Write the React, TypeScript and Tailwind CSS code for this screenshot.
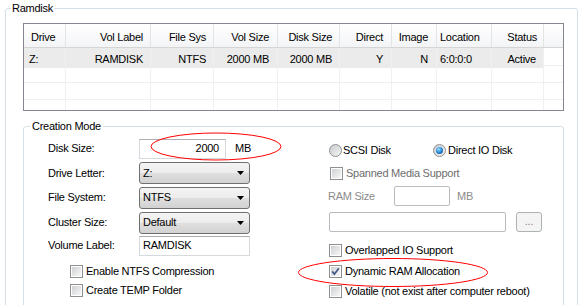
import type { ReactNode } from 'react'

interface Column {
  label: string
  value: string
  cell: string
  head: string
}

// list view columns, widths include the 1px grid line on the right
const columns: Column[] = [
  { label: 'Drive', value: 'Z:', cell: 'pl-[5px] text-left', head: 'pl-[7px] text-left' },
  { label: 'Vol Label', value: 'RAMDISK', cell: 'pr-[7px] text-right', head: 'pr-[7px] text-right' },
  { label: 'File Sys', value: 'NTFS', cell: 'pr-[7px] text-right', head: 'pr-[7px] text-right' },
  { label: 'Vol Size', value: '2000 MB', cell: 'pr-[8px] text-right', head: 'pr-[8px] text-right' },
  { label: 'Disk Size', value: '2000 MB', cell: 'pr-[7px] text-right', head: 'pr-[7px] text-right' },
  { label: 'Direct', value: 'Y', cell: 'pr-[8px] text-right', head: 'pr-[8px] text-right' },
  { label: 'Image', value: 'N', cell: 'pr-[8px] text-right', head: 'pr-[8px] text-right' },
  { label: 'Location', value: '6:0:0:0', cell: 'pl-[3px] text-left', head: 'pl-[3px] text-left' },
  { label: 'Status', value: 'Active', cell: 'pr-[7px] text-right', head: 'pr-[6px] text-right' },
]

const gridCols = 'grid grid-cols-[42px_85px_63px_64px_62px_52px_45px_55px_52px_19px]'

function Check({ checked }: { checked?: boolean }) {
  return (
    <span className="relative flex h-[13px] w-[13px] shrink-0 border border-[#8e8f8f] bg-white p-[1px]">
      <span className="flex-1 bg-gradient-to-br from-[#cfd1d4] to-[#f7f7f7]" />
      {checked && (
        <svg className="absolute left-[-1px] top-[-1px]" width="13" height="13" viewBox="0 0 13 13">
          <path d="M3.2 6.4 L5.4 9.2 L9.8 3.2" fill="none" stroke="#43568a" strokeWidth="1.7" />
        </svg>
      )}
    </span>
  )
}

function Radio({ selected }: { selected?: boolean }) {
  return (
    <span className="flex h-[13px] w-[13px] shrink-0 items-center justify-center rounded-full border border-[#8e8f8f] bg-gradient-to-br from-[#c9cbce] to-[#f5f5f5]">
      {selected && (
        <span className="h-[7px] w-[7px] rounded-full bg-[radial-gradient(circle_at_40%_35%,#a8e2ff,#2a8fe0_45%,#0b3f7a)]" />
      )}
    </span>
  )
}

function CheckRow({ label, checked, dim, className }: { label: string; checked?: boolean; dim?: boolean; className: string }) {
  return (
    <div className={`flex items-center gap-[3px] ${className}`}>
      <Check checked={checked} />
      <span className={dim ? 'text-[#6d6d6d]' : 'text-black'}>{label}</span>
    </div>
  )
}

function Combo({ value }: { value: string }) {
  return (
    <div className="flex h-[22px] w-[111px] items-center justify-between rounded-[3px] border border-[#707070] bg-[linear-gradient(#f4f4f4_0%,#ececec_50%,#dfdfdf_50%,#d2d2d2_100%)] pl-[3px] pr-[4px]">
      <span>{value}</span>
      <svg width="8" height="4" viewBox="0 0 8 4">
        <path d="M0 0 H7 L3.5 4 Z" fill="#000" />
      </svg>
    </div>
  )
}

function TextBox({ children, className }: { children?: ReactNode; className: string }) {
  return (
    <div className={`flex h-[20px] items-center border border-[#d6d9de] border-t-[#abadb3] bg-white ${className}`}>
      {children}
    </div>
  )
}

function FieldRow({ label, height, children }: { label: string; height: string; children: ReactNode }) {
  return (
    <div className={`flex items-center ${height}`}>
      <span className="w-[91px]">{label}</span>
      {children}
    </div>
  )
}

export default function App() {
  return (
    <div className="relative h-[305px] w-[584px] overflow-hidden bg-white font-['Liberation_Sans',Arial,sans-serif] text-[11px] tracking-[-0.25px] text-black">
      <fieldset className="m-0 ml-[5px] h-[400px] w-[573px] rounded-[3px] border border-[#d5dfe5] p-0">
        <legend className="ml-[5px] px-[1px] pt-[1px] leading-[15px]">Ramdisk</legend>

        {/* Disk list */}
        <div className="ml-[17px] mt-[7px] h-[88px] w-[541px] overflow-hidden border border-[#828790]">
          <div className={`${gridCols} h-[24px] border-b border-[#d5d5d5] bg-gradient-to-b from-white to-[#f3f4f6]`}>
            {columns.map(c => (
              <div key={c.label} className={`flex items-center border-r border-[#e3e4e6] pt-[3px] ${c.head} ${c.head.includes('text-right') ? 'justify-end' : ''}`}>
                {c.label}
              </div>
            ))}
            <div />
          </div>
          <div className={`${gridCols} h-[18px] border-b border-[#f0f0f0]`}>
            {columns.map(c => (
              <div key={c.label} className={`flex items-center border-r border-[#f0f0f0] bg-[#ebebeb] pt-[3px] ${c.cell} ${c.cell.includes('text-right') ? 'justify-end' : ''}`}>
                {c.value}
              </div>
            ))}
            <div />
          </div>
          {[0, 1, 2].map(r => (
            <div key={r} className={`${gridCols} h-[17px] border-b border-[#f0f0f0]`}>
              {columns.map(c => (
                <div key={c.label} className="border-r border-[#f0f0f0]" />
              ))}
              <div />
            </div>
          ))}
        </div>

        <fieldset className="m-0 ml-[17px] mt-[8px] h-[300px] w-[541px] rounded-[3px] border border-[#d5dfe5] p-0">
          <legend className="ml-[6px] px-[2px] leading-[15px]">Creation Mode</legend>

          <div className="flex pt-[2px]">
            {/* left column */}
            <div className="flex w-[304px] flex-col pl-[24px]">
              <FieldRow label="Disk Size:" height="h-[25px]">
                <TextBox className="w-[87px] justify-end pr-[6px]">2000</TextBox>
                <span className="ml-[9px]">MB</span>
              </FieldRow>
              <FieldRow label="Drive Letter:" height="h-[24px]">
                <Combo value="Z:" />
              </FieldRow>
              <FieldRow label="File System:" height="h-[25px]">
                <Combo value="NTFS" />
              </FieldRow>
              <FieldRow label="Cluster Size:" height="h-[25px]">
                <Combo value="Default" />
              </FieldRow>
              <FieldRow label="Volume Label:" height="h-[21px]">
                <TextBox className="w-[111px] pl-[3px]">RAMDISK</TextBox>
              </FieldRow>
              <CheckRow label="Enable NTFS Compression" className="ml-[22px] mt-[5px] h-[20px]" />
              <CheckRow label="Create TEMP Folder" className="ml-[22px] h-[19px]" />
            </div>

            {/* right column */}
            <div className="flex flex-col pl-[1px]">
              <div className="mt-[2px] flex h-[24px] items-center">
                <div className="flex w-[104px] items-center gap-[1px]">
                  <Radio />
                  <span>SCSI Disk</span>
                </div>
                <div className="flex items-center gap-[2px]">
                  <Radio selected />
                  <span>Direct IO Disk</span>
                </div>
              </div>
              <CheckRow label="Spanned Media Support" dim className="h-[22px] pl-[1px]" />
              <div className="flex h-[24px] items-center text-[#8b8b8b]">
                <span className="ml-[-1px] w-[66px]">RAM Size</span>
                <div className="h-[20px] w-[56px] rounded-[2px] border border-[#b9bcc0] bg-white" />
                <span className="ml-[7px]">MB</span>
              </div>
              <div className="flex h-[28px] items-center">
                <div className="h-[20px] w-[177px] rounded-[2px] border border-[#b9bcc0] bg-white" />
                <div className="ml-[10px] flex h-[20px] w-[26px] items-center justify-center rounded-[3px] border border-[#adb2b5] bg-[#f4f4f4] pb-[2px] text-[#838383]">
                  ...
                </div>
              </div>
              <CheckRow label="Overlapped IO Support" className="mt-[4px] h-[21px]" />
              <CheckRow label="Dynamic RAM Allocation" checked className="h-[20px]" />
              <CheckRow label="Volatile (not exist after computer reboot)" className="h-[20px]" />
            </div>
          </div>
        </fieldset>
      </fieldset>

      {/* red annotation marks */}
      <svg className="pointer-events-none absolute inset-0" width="584" height="305">
        <ellipse cx="216" cy="146.5" rx="65" ry="13.5" fill="none" stroke="#ff0000" strokeWidth="1" />
        <ellipse cx="393" cy="272.5" rx="94.5" ry="14" fill="none" stroke="#ff0000" strokeWidth="1" />
      </svg>
    </div>
  )
}
